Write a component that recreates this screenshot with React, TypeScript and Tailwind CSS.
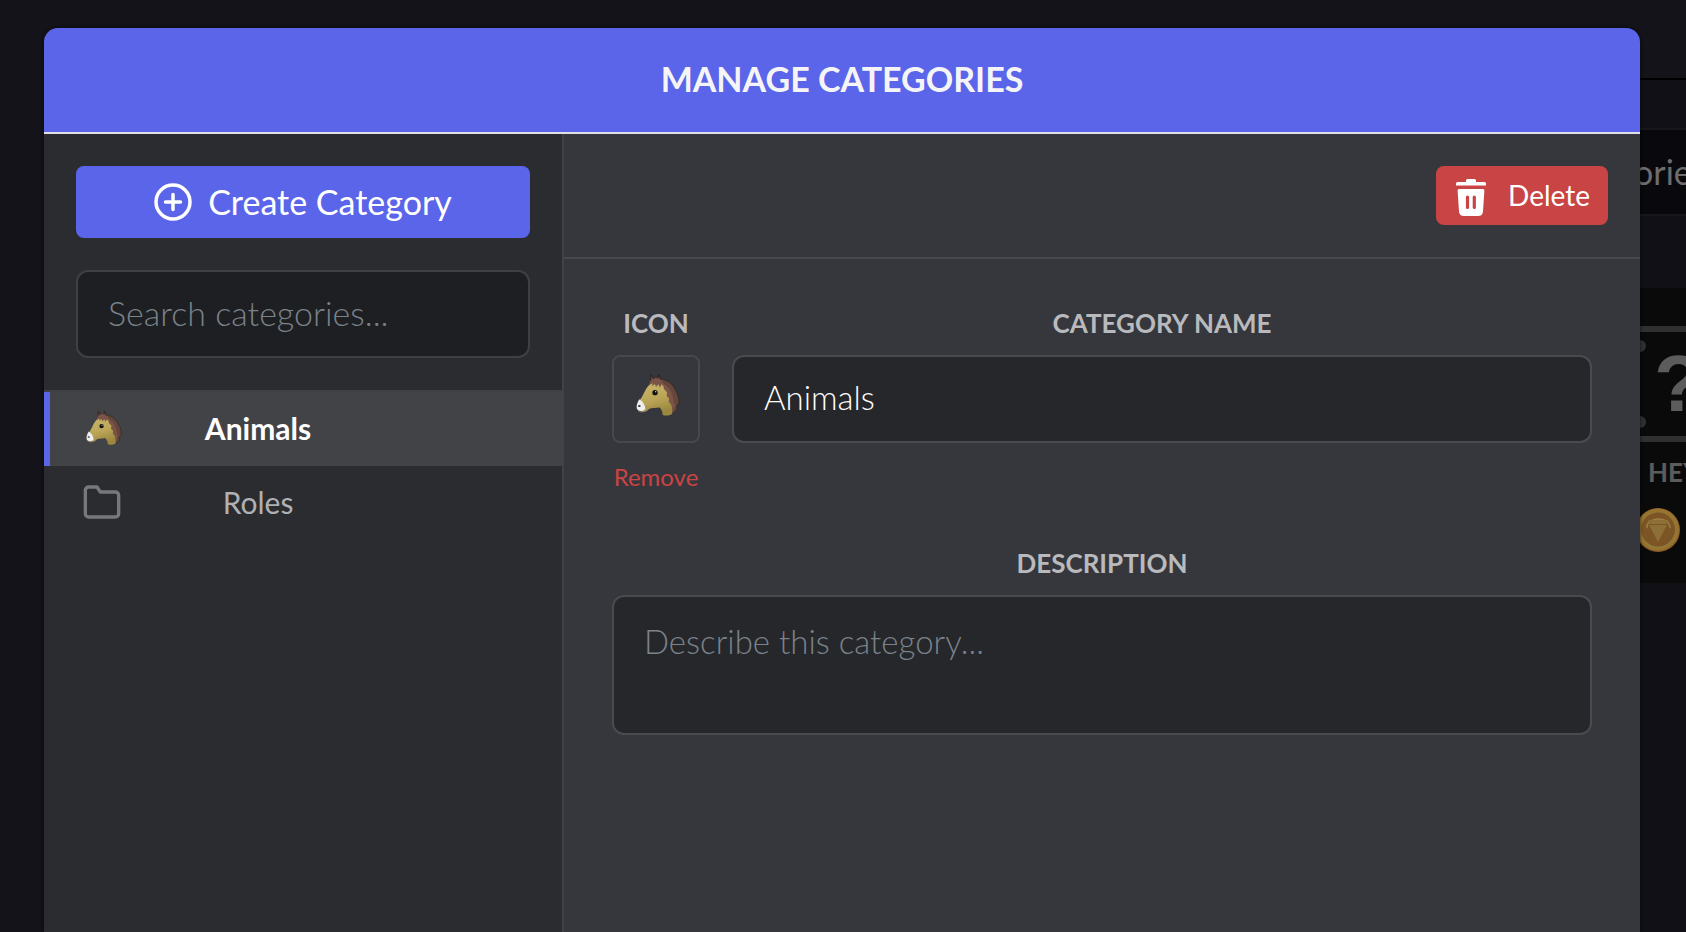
import { useState } from "react";

type Category = {
  id: string;
  name: string;
  icon: "horse" | null;
};

const CATEGORIES: Category[] = [
  { id: "animals", name: "Animals", icon: "horse" },
  { id: "roles", name: "Roles", icon: null },
];

function HorseIcon({ className }: { className?: string }) {
  return (
    <svg viewBox="0 0 132 130" className={className} aria-hidden>
      <defs>
        <linearGradient id="coat" x1="0" y1="0" x2="0.3" y2="1">
          <stop offset="0" stopColor="#ccb86e" />
          <stop offset="0.6" stopColor="#bba658" />
          <stop offset="1" stopColor="#9c8840" />
        </linearGradient>
      </defs>
      <path
        d="M72 20C92 18 108 30 118 50C126 62 130 76 129 90L122 100L124 108L113 122L104 112L98 70L76 40Z"
        fill="#64463b"
        stroke="#2b201d"
        strokeWidth="2"
      />
      <path
        d="M44 30L45 5L57 22ZM64 22L68 4L78 28L80 44L72 40Z"
        fill="#6b4a3e"
        stroke="#2b201d"
        strokeWidth="3"
      />
      <path
        d="M43 32C52 22 78 22 84 36C96 50 98 72 107 98C110 110 110 118 108 123C100 128 88 129 80 126C80 116 76 108 70 103C56 107 44 103 36 111C26 120 6 118 3 106C4 90 14 80 22 64C28 50 34 40 43 32Z"
        fill="url(#coat)"
      />
      <path
        d="M80 30C102 42 114 66 113 88L118 98L111 112L107 96L98 86L100 76L92 70L93 58L84 48Z"
        fill="#7a5446"
      />
      <path d="M10 79C18 84 27 94 28 108C24 116 6 117 2 106C1 96 5 87 10 79Z" fill="#eeeeee" />
      <path d="M6 114C16 120 30 116 37 109" fill="none" stroke="#8d897c" strokeWidth="2" />
      <ellipse cx="10" cy="99" rx="4" ry="3" fill="#333336" />
      <path
        d="M44 22L60 14L80 22L82 40L76 34L72 44L67 34L60 42L57 33L48 40L50 31L39 37Z"
        fill="#7a5446"
      />
      <circle cx="57" cy="59" r="8" fill="#111111" />
      <circle cx="59" cy="56" r="2" fill="#dddddd" />
    </svg>
  );
}

function FolderIcon({ className }: { className?: string }) {
  return (
    <svg
      viewBox="0 0 24 24"
      className={className}
      fill="none"
      stroke="currentColor"
      strokeWidth="2"
      strokeLinecap="round"
      strokeLinejoin="round"
      aria-hidden
    >
      <path d="M22 19a2 2 0 0 1-2 2H4a2 2 0 0 1-2-2V5a2 2 0 0 1 2-2h5l2 3h9a2 2 0 0 1 2 2z" />
    </svg>
  );
}

function PlusCircleIcon({ className }: { className?: string }) {
  return (
    <svg
      viewBox="0 0 38 38"
      className={className}
      fill="none"
      stroke="currentColor"
      strokeWidth="3.5"
      strokeLinecap="round"
      aria-hidden
    >
      <circle cx="19" cy="19" r="17" />
      <path d="M19 11.500v15M11.500 19h15" />
    </svg>
  );
}

function TrashIcon({ className }: { className?: string }) {
  return (
    <svg viewBox="0 0 30 38" className={className} fill="currentColor" aria-hidden>
      <path d="M11.500 0h7a1.500 1.500 0 0 1 1.500 1.500V3h8.500a1.500 1.500 0 0 1 1.500 1.500V6.500H0V4.500A1.500 1.500 0 0 1 1.500 3H10V1.500A1.500 1.500 0 0 1 11.500 0z" />
      <path
        fillRule="evenodd"
        d="M3 10h24a1.400 1.400 0 0 1 1.400 1.500L27 32.500a5 5 0 0 1-5 4.500H8a5 5 0 0 1-5-4.500L1.600 11.500A1.400 1.400 0 0 1 3 10zM11.500 16.500a1.600 1.600 0 0 0-1.600 1.600v10.300a1.600 1.600 0 0 0 3.200 0V18.100a1.600 1.600 0 0 0-1.600-1.600zM18.300 16.500a1.600 1.600 0 0 0-1.600 1.600v10.300a1.600 1.600 0 0 0 3.200 0V18.100a1.600 1.600 0 0 0-1.600-1.600z"
      />
    </svg>
  );
}

function CoinIcon({ className }: { className?: string }) {
  return (
    <svg viewBox="0 0 44 44" className={className} aria-hidden>
      <circle cx="22" cy="22" r="22" fill="#8a5a26" />
      <circle cx="22" cy="21.500" r="21" fill="#96742f" />
      <circle cx="22" cy="22" r="18" fill="#8f7a3c" />
      <circle cx="22" cy="21.500" r="17" fill="#7d5524" />
      <path d="M11 20C9 10 33 6 34 20" fill="none" stroke="#9a8048" strokeWidth="1.500" />
      <path d="M12 12H33L30 16H14ZM13 17H31L22 34Z" fill="#8c7038" />
    </svg>
  );
}

// Dimmed page that peeks out beside the dialog
function Backdrop() {
  return (
    <div
      className="absolute inset-y-0 right-0 flex w-1/2 flex-col overflow-hidden bg-[#111016]"
      aria-hidden
    >
      <div className="h-20 shrink-0 border-b-2 border-black bg-[#141319]" />
      <div className="h-[50px] shrink-0 border-b-2 border-[#17161b]" />
      <div className="flex h-[86px] shrink-0 items-center justify-end border-b-2 border-[#17161b] bg-[#09090d]">
        <span className="w-[52px] text-[34px] leading-10 text-[#6d6d6f]">orie</span>
      </div>
      <div className="h-[72px] shrink-0" />
      <div className="flex h-[295px] shrink-0 flex-col items-end bg-[#0a0a0b] pt-[38px]">
        <div className="flex h-[116px] w-[52px] border-y-[6px] border-[#303030]">
          <div className="flex flex-col justify-between py-2">
            <span className="size-3 rounded-full bg-[#303030]" />
            <span className="size-3 rounded-full bg-[#303030]" />
          </div>
          <span className="pl-2 font-['Liberation_Sans',sans-serif] text-[80px] leading-[104px] font-bold text-[#5c5c5c]">
            ?
          </span>
        </div>
        <span className="mt-3 w-[38px] text-[26px] leading-9 font-bold text-[#5c5c5c]">HEY</span>
        <CoinIcon className="mt-[18px] mr-[6px] size-11 shrink-0" />
      </div>
    </div>
  );
}

export default function App() {
  const [selectedId, setSelectedId] = useState("animals");
  const [name, setName] = useState("Animals");

  return (
    <div className="relative min-h-screen bg-[#141319] pt-7 pr-[46px] pl-11 font-[Lato,sans-serif]">
      <Backdrop />

      <div
        role="dialog"
        aria-labelledby="dialog-title"
        className="relative flex min-h-[calc(100vh-28px)] flex-col overflow-hidden rounded-t-[14px] shadow-[0_0_3px_1px_rgba(0,0,0,0.4)]"
      >
        <header className="flex h-[106px] items-center justify-center border-b-2 border-[#e0e0e6] bg-[#5b65ea] pb-0.5">
          <h1 id="dialog-title" className="text-[34px] leading-10 font-bold text-[#f5f5f7]">
            MANAGE CATEGORIES
          </h1>
        </header>

        <div className="flex flex-1">
          <aside className="flex w-[520px] shrink-0 flex-col border-r-2 border-[#414247] bg-[#2b2c30]">
            <div className="flex flex-col gap-8 p-8">
              <button
                type="button"
                className="flex h-[72px] items-center justify-center gap-4 rounded-lg bg-[#5b65ea] text-[34px] leading-10 text-white"
              >
                <PlusCircleIcon className="size-[38px]" />
                Create Category
              </button>
              <input
                type="search"
                aria-label="Search categories"
                placeholder="Search categories..."
                className="h-[88px] rounded-xl border-2 border-[#3f4044] bg-[#1e1f22] px-[30px] pb-1 text-[34px] leading-10 font-light text-white outline-none placeholder:text-[#7a828a]"
              />
            </div>

            <nav className="border-t-2 border-[#3f4044]">
              {CATEGORIES.map((category) => {
                const active = category.id === selectedId;
                return (
                  <button
                    key={category.id}
                    type="button"
                    onClick={() => setSelectedId(category.id)}
                    className={
                      active
                        ? "flex h-[74px] w-full items-center gap-4 border-l-[6px] border-[#5b65ea] bg-[#424346] pb-0.5 pl-8 text-[30px] leading-9 font-bold text-white"
                        : "flex h-[74px] w-full items-center gap-4 border-l-[6px] border-transparent pb-0.5 pl-8 text-[30px] leading-9 text-[#b0b1b4]"
                    }
                  >
                    <span className="flex size-10 items-center justify-center">
                      {category.icon === "horse" ? (
                        <HorseIcon className="ml-1 w-9" />
                      ) : (
                        <FolderIcon className="size-10 text-[#77787c]" />
                      )}
                    </span>
                    <span className="w-60 text-center">{category.name}</span>
                  </button>
                );
              })}
            </nav>
          </aside>

          <main className="flex min-w-0 flex-1 flex-col bg-[#36373c]">
            <div className="flex justify-end border-b-2 border-[#47484c] p-8">
              <button
                type="button"
                className="flex h-[59px] items-start gap-[22px] rounded-lg bg-[#c94444] pr-[18px] pl-5 text-[28px] text-white"
              >
                <TrashIcon className="mt-[13px] h-[38px] w-[30px]" />
                <span className="leading-[58px]">Delete</span>
              </button>
            </div>

            <form className="flex flex-col gap-12 p-12" onSubmit={(e) => e.preventDefault()}>
              <div className="flex items-start gap-8">
                <div className="flex w-[88px] shrink-0 flex-col items-center gap-4">
                  <span className="text-[26px] leading-8 font-bold text-[#b9babd]">ICON</span>
                  <button
                    type="button"
                    aria-label="Change icon"
                    className="flex size-[88px] items-center justify-center rounded-lg border-2 border-[#47484c] pb-2 pl-1"
                  >
                    <HorseIcon className="w-11" />
                  </button>
                  <button type="button" className="h-10 pb-1 text-2xl leading-8 text-[#c94444]">
                    Remove
                  </button>
                </div>
                <div className="flex min-w-0 flex-1 flex-col gap-4">
                  <label
                    htmlFor="category-name"
                    className="text-center text-[26px] leading-8 font-bold text-[#b9babd]"
                  >
                    CATEGORY NAME
                  </label>
                  <input
                    id="category-name"
                    value={name}
                    onChange={(e) => setName(e.target.value)}
                    className="h-[88px] w-full rounded-xl border-2 border-[#4a4b4e] bg-[#26272a] px-[30px] pb-1 text-[33px] leading-10 font-light text-white outline-none"
                  />
                </div>
              </div>

              <div className="flex flex-col gap-4">
                <label
                  htmlFor="category-description"
                  className="text-center text-[26px] leading-8 font-bold text-[#b9babd]"
                >
                  DESCRIPTION
                </label>
                <textarea
                  id="category-description"
                  placeholder="Describe this category..."
                  className="h-[140px] resize-none rounded-xl border-2 border-[#4a4b4e] bg-[#26272a] px-[30px] py-6 text-[33px] leading-10 font-light text-white outline-none placeholder:text-[#7a828a]"
                />
              </div>
            </form>
          </main>
        </div>
      </div>
    </div>
  );
}
